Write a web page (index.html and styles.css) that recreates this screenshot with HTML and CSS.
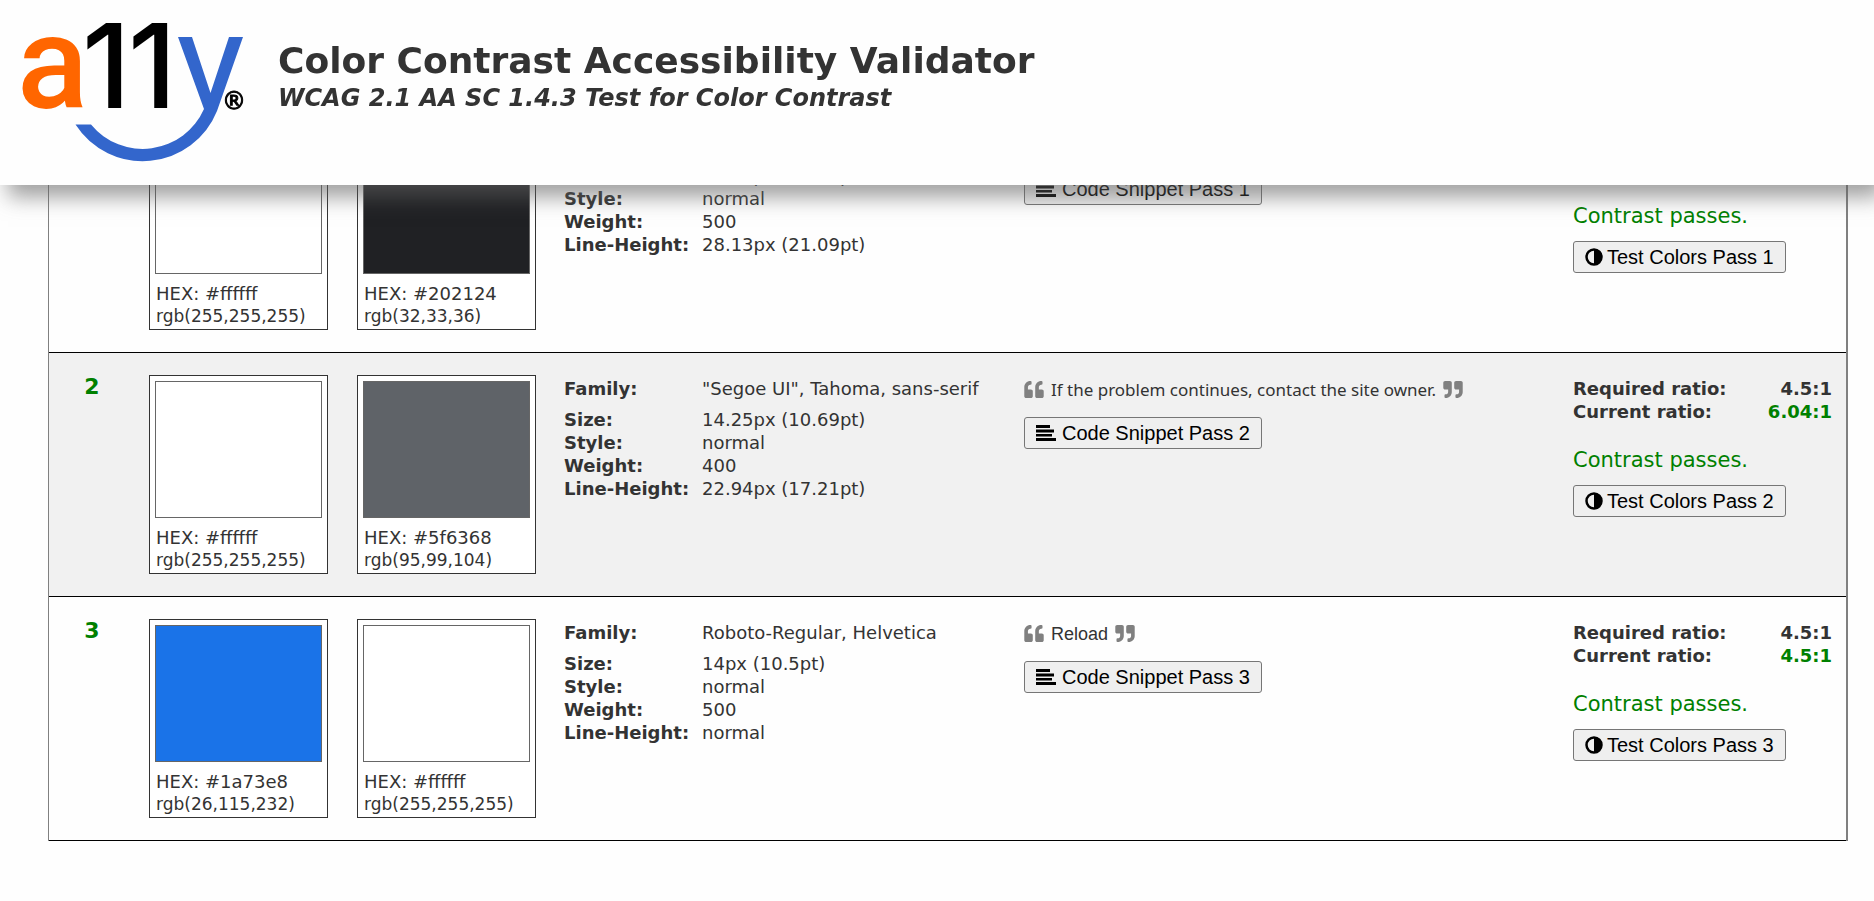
FILE: index.html
```
<!DOCTYPE html>
<html lang="en">
<head>
<meta charset="utf-8">
<title>Color Contrast Accessibility Validator</title>
<link rel="stylesheet" href="styles.css">
</head>
<body>
<svg class="sprite" aria-hidden="true">
  <symbol id="quote-left" viewBox="0 32 512 448"><path d="M464 256h-80v-64c0-35.3 28.7-64 64-64h8c13.3 0 24-10.7 24-24V56c0-13.3-10.7-24-24-24h-8c-88.4 0-160 71.6-160 160v240c0 26.500 21.500 48 48 48h128c26.500 0 48-21.500 48-48V304c0-26.500-21.500-48-48-48zm-288 0H96v-64c0-35.300 28.700-64 64-64h8c13.300 0 24-10.700 24-24V56c0-13.300-10.700-24-24-24h-8C71.600 32 0 103.600 0 192v240c0 26.500 21.500 48 48 48h128c26.500 0 48-21.500 48-48V304c0-26.500-21.500-48-48-48z"/></symbol>
  <symbol id="quote-right" viewBox="0 32 512 448"><path transform="rotate(180 256 256)" d="M464 256h-80v-64c0-35.3 28.7-64 64-64h8c13.3 0 24-10.7 24-24V56c0-13.3-10.7-24-24-24h-8c-88.4 0-160 71.6-160 160v240c0 26.500 21.500 48 48 48h128c26.500 0 48-21.500 48-48V304c0-26.500-21.500-48-48-48zm-288 0H96v-64c0-35.300 28.700-64 64-64h8c13.300 0 24-10.700 24-24V56c0-13.300-10.700-24-24-24h-8C71.600 32 0 103.600 0 192v240c0 26.500 21.500 48 48 48h128c26.500 0 48-21.500 48-48V304c0-26.500-21.500-48-48-48z"/></symbol>
  <symbol id="lines" viewBox="0 0 20 16"><path d="M0 0h14v3H0zM0 4.500h18v3H0zM0 9h16v2.500H0zM0 13h20v3H0z"/></symbol>
  <symbol id="half" viewBox="0 0 18 18"><circle cx="9" cy="9" r="7.500" fill="none" stroke="#000" stroke-width="2.500"/><path d="M9 1a8 8 0 0 1 0 16z"/></symbol>
</svg>

<header class="header">
  <svg class="logo" viewBox="0 0 250 165" role="img" aria-label="a11y">
    <text class="logo-one" y="108"><tspan class="logo-a" x="17">a</tspan><tspan x="82 128">11</tspan></text>
    <path fill="#3366cc" d="M178 37h14l18.500 56L229 37h14L217 111A80 80 0 0 1 75.500 124.500H91A67 67 0 0 0 204 109z"/>
    <text class="logo-reg" x="222" y="109">®</text>
  </svg>
  <div class="titles">
    <h1 class="title">Color Contrast Accessibility Validator</h1>
    <p class="subtitle">WCAG 2.1 AA SC 1.4.3 Test for Color Contrast</p>
  </div>
</header>

<main class="main">
  <table class="results">
    <colgroup><col class="c-num"><col class="c-card"><col class="c-card2"><col class="c-font"><col><col class="c-ratio"></colgroup>
    <tbody>
      <tr>
        <th class="num" scope="row">1</th>
        <td><div class="card"><div class="swatch white"></div><div class="hex">HEX: #ffffff</div><div class="rgb">rgb(255,255,255)</div></div></td>
        <td><div class="card"><div class="swatch ink"></div><div class="hex">HEX: #202124</div><div class="rgb">rgb(32,33,36)</div></div></td>
        <td><dl class="props"><dt class="family">Family:</dt><dd class="family">Roboto-Regular, Helvetica</dd><dt>Size:</dt><dd>18.75px (14.06pt)</dd><dt>Style:</dt><dd>normal</dd><dt>Weight:</dt><dd>500</dd><dt>Line-Height:</dt><dd>28.13px (21.09pt)</dd></dl></td>
        <td><div class="quote"><svg class="q"><use href="#quote-left"/></svg><span class="arial">Error</span><svg class="q"><use href="#quote-right"/></svg></div>
          <button type="button" class="btn"><svg class="i-lines"><use href="#lines"/></svg>Code Snippet Pass 1</button></td>
        <td><dl class="ratios"><dt>Required ratio:</dt><dd>4.5:1</dd><dt>Current ratio:</dt><dd class="ok">16.1:1</dd></dl><p class="verdict">Contrast passes.</p>
          <button type="button" class="btn test"><svg class="i-half"><use href="#half"/></svg>Test Colors Pass 1</button></td>
      </tr>
      <tr>
        <th class="num" scope="row">2</th>
        <td><div class="card"><div class="swatch white"></div><div class="hex">HEX: #ffffff</div><div class="rgb">rgb(255,255,255)</div></div></td>
        <td><div class="card"><div class="swatch slate"></div><div class="hex">HEX: #5f6368</div><div class="rgb">rgb(95,99,104)</div></div></td>
        <td><dl class="props"><dt class="family">Family:</dt><dd class="family">"Segoe UI", Tahoma, sans-serif</dd><dt>Size:</dt><dd>14.25px (10.69pt)</dd><dt>Style:</dt><dd>normal</dd><dt>Weight:</dt><dd>400</dd><dt>Line-Height:</dt><dd>22.94px (17.21pt)</dd></dl></td>
        <td><div class="quote"><svg class="q"><use href="#quote-left"/></svg><span class="segoe">If the problem continues, contact the site owner.</span><svg class="q"><use href="#quote-right"/></svg></div>
          <button type="button" class="btn"><svg class="i-lines"><use href="#lines"/></svg>Code Snippet Pass 2</button></td>
        <td><dl class="ratios"><dt>Required ratio:</dt><dd>4.5:1</dd><dt>Current ratio:</dt><dd class="ok">6.04:1</dd></dl><p class="verdict">Contrast passes.</p>
          <button type="button" class="btn test"><svg class="i-half"><use href="#half"/></svg>Test Colors Pass 2</button></td>
      </tr>
      <tr>
        <th class="num" scope="row">3</th>
        <td><div class="card"><div class="swatch blue"></div><div class="hex">HEX: #1a73e8</div><div class="rgb">rgb(26,115,232)</div></div></td>
        <td><div class="card"><div class="swatch white"></div><div class="hex">HEX: #ffffff</div><div class="rgb">rgb(255,255,255)</div></div></td>
        <td><dl class="props"><dt class="family">Family:</dt><dd class="family">Roboto-Regular, Helvetica</dd><dt>Size:</dt><dd>14px (10.5pt)</dd><dt>Style:</dt><dd>normal</dd><dt>Weight:</dt><dd>500</dd><dt>Line-Height:</dt><dd>normal</dd></dl></td>
        <td><div class="quote"><svg class="q"><use href="#quote-left"/></svg><span class="arial">Reload</span><svg class="q"><use href="#quote-right"/></svg></div>
          <button type="button" class="btn"><svg class="i-lines"><use href="#lines"/></svg>Code Snippet Pass 3</button></td>
        <td><dl class="ratios"><dt>Required ratio:</dt><dd>4.5:1</dd><dt>Current ratio:</dt><dd class="ok">4.5:1</dd></dl><p class="verdict">Contrast passes.</p>
          <button type="button" class="btn test"><svg class="i-half"><use href="#half"/></svg>Test Colors Pass 3</button></td>
      </tr>
    </tbody>
  </table>
</main>
</body>
</html>
```
FILE: styles.css
```
* { box-sizing: border-box; }
body {
  margin: 0;
  background: #fefefe;
  color: #333;
  font: 18px/23px Verdana, "DejaVu Sans", sans-serif;
}
.sprite { position: absolute; width: 0; height: 0; }
.header {
  position: fixed;
  top: 0;
  left: 0;
  right: 0;
  display: flex;
  gap: 28px;
  height: 185px;
  background: #fefefe;
  box-shadow: 8px 12px 20px rgba(96, 96, 96, 0.6);
}
.logo { width: 250px; height: 165px; flex: none; overflow: visible; }
.logo-a { font: 500 132px Roboto, sans-serif; fill: #f60; }
.logo-one { font: 500 117px Inter, sans-serif; }
.logo-reg { font: 24px "DejaVu Sans", sans-serif; stroke: #000; stroke-width: 1; }
.titles { padding-top: 39px; }
.title { margin: 0; font-size: 36px; line-height: 44px; }
.subtitle { margin: 0; font-size: 24px; line-height: 30px; font-weight: bold; font-style: italic; }
.main { padding: 108px 26px 60px 48px; }
.results {
  width: 100%;
  table-layout: fixed;
  border-spacing: 0;
  border: solid #808080;
  border-width: 1px 2px 0 1px;
}
.c-num { width: 100px; }
.c-card { width: 208px; }
.c-card2 { width: 207px; }
.c-font { width: 460px; }
.c-ratio { width: 273px; }
.results td, .results th {
  padding: 22px 0;
  vertical-align: top;
  border-bottom: 1px solid #000;
}
.results tr:nth-child(even) { background: #f1f1f1; }
.results .num {
  padding-right: 14px;
  font-size: 22px;
  color: green;
}
.card {
  width: 179px;
  padding: 5px 5px 1px;
  border: 1px solid #333;
  background: #fff;
}
.swatch { height: 137px; margin-bottom: 9px; border: 1px solid #666; }
.white { background: #fff; }
.ink { background: #202124; }
.slate { background: #5f6368; }
.blue { background: #1a73e8; }
.hex, .rgb { padding-left: 1px; white-space: nowrap; }
.hex { line-height: 22px; }
.rgb { font-size: 17px; line-height: 23px; }
.props, .ratios { display: grid; margin: 0; padding-top: 2px; }
.props { grid-template-columns: 138px 1fr; }
.props .family { margin-bottom: 8px; }
dt { font-weight: bold; }
dd { margin: 0; }
.quote {
  display: flex;
  align-items: center;
  gap: 7px;
  height: 28px;
  margin-bottom: 14px;
}
.q { width: 20px; height: 17px; fill: #808080; }
.segoe, .arial { padding-top: 2px; }
.segoe { font: 17px/24px "Segoe UI", "Noto Sans", sans-serif; }
.arial { font: 18px/24px Arial, "Liberation Sans", sans-serif; }
.btn {
  display: flex;
  align-items: center;
  gap: 6px;
  height: 32px;
  padding: 0 11px;
  border: 1px solid #767676;
  border-radius: 3px;
  background: #efefef;
  color: #000;
  font: 20px/24px Arial, "Liberation Sans", sans-serif;
}
.test { gap: 4px; }
.i-lines { width: 20px; height: 16px; }
.i-half { width: 18px; height: 18px; }
.ratios { grid-template-columns: 1fr auto; padding-right: 14px; font-weight: bold; }
.ratios dd { text-align: right; }
.ok { color: green; }
.verdict { margin: 24px 0 12px; font-size: 21px; line-height: 26px; color: green; }
```
